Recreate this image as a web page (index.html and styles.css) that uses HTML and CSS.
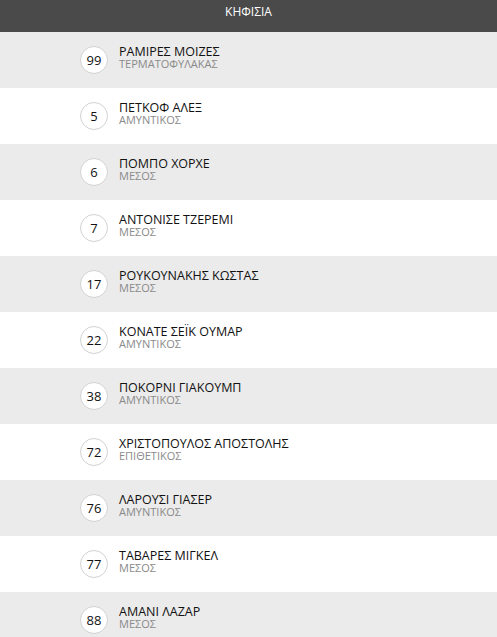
FILE: index.html
```html
<!DOCTYPE html>
<html lang="el">
<head>
<meta charset="utf-8">
<title>ΚΗΦΙΣΙΑ</title>
<link rel="stylesheet" href="styles.css">
</head>
<body>
<div class="roster">
  <div class="header">ΚΗΦΙΣΙΑ</div>
  <div class="row"><span class="num">99</span><div class="info"><div class="name">ΡΑΜΙΡΕΣ ΜΟΙΖΕΣ</div><div class="pos">ΤΕΡΜΑΤΟΦΥΛΑΚΑΣ</div></div></div>
  <div class="row"><span class="num">5</span><div class="info"><div class="name">ΠΕΤΚΟΦ ΑΛΕΞ</div><div class="pos">ΑΜΥΝΤΙΚΟΣ</div></div></div>
  <div class="row"><span class="num">6</span><div class="info"><div class="name">ΠΟΜΠΟ ΧΟΡΧΕ</div><div class="pos">ΜΕΣΟΣ</div></div></div>
  <div class="row"><span class="num">7</span><div class="info"><div class="name">ΑΝΤΟΝΙΣΕ ΤΖΕΡΕΜΙ</div><div class="pos">ΜΕΣΟΣ</div></div></div>
  <div class="row"><span class="num">17</span><div class="info"><div class="name">ΡΟΥΚΟΥΝΑΚΗΣ ΚΩΣΤΑΣ</div><div class="pos">ΜΕΣΟΣ</div></div></div>
  <div class="row"><span class="num">22</span><div class="info"><div class="name">ΚΟΝΑΤΕ ΣΕΪΚ ΟΥΜΑΡ</div><div class="pos">ΑΜΥΝΤΙΚΟΣ</div></div></div>
  <div class="row"><span class="num">38</span><div class="info"><div class="name">ΠΟΚΟΡΝΙ ΓΙΑΚΟΥΜΠ</div><div class="pos">ΑΜΥΝΤΙΚΟΣ</div></div></div>
  <div class="row"><span class="num">72</span><div class="info"><div class="name">ΧΡΙΣΤΟΠΟΥΛΟΣ ΑΠΟΣΤΟΛΗΣ</div><div class="pos">ΕΠΙΘΕΤΙΚΟΣ</div></div></div>
  <div class="row"><span class="num">76</span><div class="info"><div class="name">ΛΑΡΟΥΣΙ ΓΙΑΣΕΡ</div><div class="pos">ΑΜΥΝΤΙΚΟΣ</div></div></div>
  <div class="row"><span class="num">77</span><div class="info"><div class="name">ΤΑΒΑΡΕΣ ΜΙΓΚΕΛ</div><div class="pos">ΜΕΣΟΣ</div></div></div>
  <div class="row"><span class="num">88</span><div class="info"><div class="name">ΑΜΑΝΙ ΛΑΖΑΡ</div><div class="pos">ΜΕΣΟΣ</div></div></div>
</div>
</body>
</html>
```
FILE: styles.css
```css
html, body {
  margin: 0;
  padding: 0;
  background: #ffffff;
}
body {
  font-family: "Open Sans", "Noto Sans", sans-serif;
}
.roster {
  width: 497px;
}
.header {
  height: 32px;
  background: #4a4a4a;
  color: #ffffff;
  font-size: 12px;
  line-height: 24px;
  text-align: center;
}
.row {
  height: 56px;
  display: flex;
  align-items: center;
  padding-left: 80px;
  gap: 11px;
  box-sizing: border-box;
}
.row:nth-child(even) {
  background: #ebebeb;
}
.num {
  width: 28px;
  height: 28px;
  box-sizing: border-box;
  border: 1px solid #d2d2d2;
  border-radius: 50%;
  background: #ffffff;
  display: flex;
  align-items: center;
  justify-content: center;
  font-size: 13px;
  color: #111111;
}
.info {
  display: flex;
  flex-direction: column;
  margin-top: -5px;
}
.name {
  font-size: 12.5px;
  line-height: 13px;
  color: #111111;
}
.pos {
  font-size: 11px;
  line-height: 12px;
  color: #8a8a8a;
}
```
